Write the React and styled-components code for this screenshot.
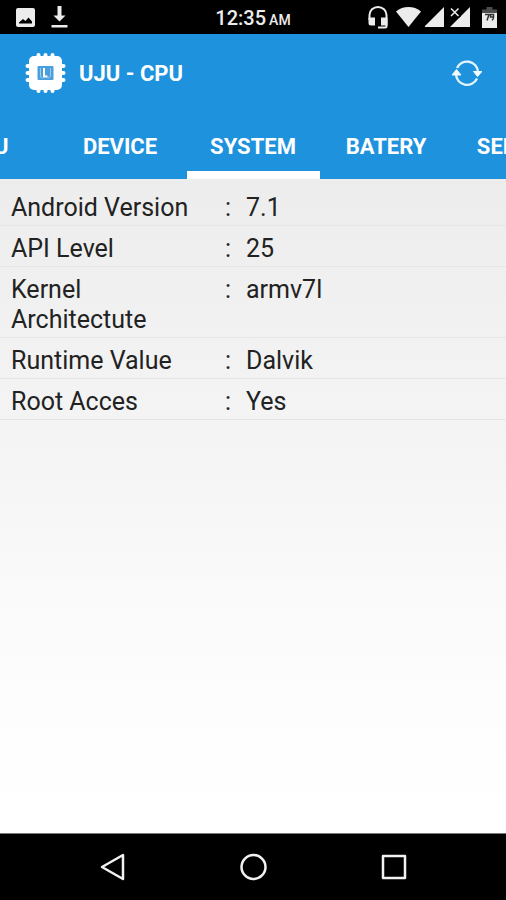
import React, {useState} from 'react';
import styled, {createGlobalStyle} from 'styled-components';

const GlobalStyle = createGlobalStyle`
    * {
        box-sizing: border-box;
    }

    body {
        margin: 0;
        font-family: Roboto, "Liberation Sans", sans-serif;
        background: #000;
    }

    button {
        padding: 0;
        border: 0;
        background: none;
        color: inherit;
        font-family: inherit;
        cursor: pointer;
    }

    svg {
        display: block;
    }
`;

const Screen = styled('div')`
    display: flex;
    flex-direction: column;
    min-height: 100vh;
    overflow: hidden;
`;

const StatusBar = styled('div')`
    display: grid;
    grid-template-columns: 1fr auto 1fr;
    align-items: center;
    height: 34px;
    padding: 0 9px;
    background: #000;
    color: #ececec;
`;

const StatusIcons = styled('div')`
    display: flex;
    align-items: center;
    justify-content: ${({$end}) => ($end ? 'flex-end' : 'flex-start')};
    gap: ${({$gap}) => $gap}px;
    padding-left: 7px;
`;

const Clock = styled('time')`
    padding-top: 3px;
    font-size: 20px;
    font-weight: 500;
    line-height: 24px;

    & small {
        margin-left: 3px;
        font-size: 14px;
    }
`;

const Header = styled('header')`
    background: #1e92dd;
    color: #fff;
`;

const Toolbar = styled('div')`
    display: flex;
    align-items: center;
    height: 78px;
    padding: 0 24px;
`;

const Title = styled('h1')`
    flex: 1;
    margin: 0;
    padding: 2px 0 0 13px;
    font-size: 22px;
    font-weight: 700;
    line-height: 28px;
`;

const Tabs = styled('div')`
    display: flex;
    justify-content: center;
    overflow: hidden;
`;

const Tab = styled('button')`
    flex: 0 0 133px;
    height: 67px;
    padding-top: 10px;
    border-bottom: 8px solid ${({$active}) => ($active ? '#fff' : 'transparent')};
    font-size: 22px;
    font-weight: 700;
    line-height: 28px;
`;

const Content = styled('main')`
    flex: 1;
    padding-top: 6px;
    background: linear-gradient(#ededed, #f4f4f4 38%, #fdfdfd 78%, #fff);
`;

const InfoList = styled('dl')`
    margin: 0;
`;

const InfoRow = styled('div')`
    display: grid;
    grid-template-columns: 210px 1fr;
    column-gap: 4px;
    padding: 8px 11px 2px;
    border-bottom: 1px solid #e6e6e6;
    color: #222;
    font-size: 25px;
    line-height: 30px;
`;

const InfoLabel = styled('dt')`
    padding-right: 8px;
`;

const InfoValue = styled('dd')`
    display: flex;
    margin: 0;

    &::before {
        content: ":";
        width: 21px;
    }
`;

const NavBar = styled('nav')`
    display: flex;
    height: 67px;
    padding: 0 43px;
    border-top: 1px solid #777;
    background: #000;
    color: #f2f2f2;
`;

const NavButton = styled('button')`
    display: flex;
    flex: 1;
    align-items: center;
    justify-content: center;
`;

const PictureIcon = () => (
    <svg width="19" height="19" viewBox="0 0 19 19" fill="currentColor">
        <path fillRule="evenodd" d="M2 0h15a2 2 0 0 1 2 2v15a2 2 0 0 1-2 2H2a2 2 0 0 1-2-2V2a2 2 0 0 1 2-2zM3 15.500h13v-2l-3.500-4-3 3.500-2.500-2-4 3.500z"/>
    </svg>
);

const DownloadIcon = () => (
    <svg width="17" height="22" viewBox="0 0 17 22" fill="currentColor">
        <path d="M6.500 0h4v9.500h4l-6 6-6-6h4zM0.500 19h16v2.500h-16z"/>
    </svg>
);

const HeadsetIcon = () => (
    <svg width="24" height="23" viewBox="0 0 24 23">
        <path d="M1.500 14V9a8.500 8 0 0 1 17 0v11q0 1.500-1.500 1.500h-7" fill="none" stroke="currentColor" strokeWidth="2"/>
        <path d="M0.500 11.500H7v8H3a2.500 2.500 0 0 1-2.500-2.500zM13 11.500h6.500v8H13z" fill="currentColor"/>
    </svg>
);

const WifiIcon = () => (
    <svg width="25" height="20" viewBox="0 0 25 20" fill="currentColor">
        <path d="M0 4.500a20 20 0 0 1 25 0L12.500 20z"/>
    </svg>
);

const SignalIcon = () => (
    <svg width="20" height="20" viewBox="0 0 20 20" fill="currentColor">
        <path d="M19 0v20H-1z"/>
    </svg>
);

const NoSignalIcon = () => (
    <svg width="21" height="20" viewBox="0 0 21 20">
        <path d="M21 0v20H1z" fill="currentColor"/>
        <path d="M2 1l9 9M11 0L1 10" stroke="#000" strokeWidth="3"/>
        <path d="M2 1.500l7.500 7.500M9.500 1.500L2 9" stroke="currentColor" strokeWidth="1.500"/>
    </svg>
);

const BatteryIcon = () => (
    <svg width="23" height="21" viewBox="-8 0 23 21">
        <path d="M4.500 0h6v2.500H15V6H0V2.500h4.500z" fill="#4c4c4c"/>
        <path d="M0 6h15v15H0z" fill="currentColor"/>
        <path d="M3 7.500h4l-2 6M11.500 11V7.500h-3V10h3q0 2.500-1.500 3.500" fill="none" stroke="#333" strokeWidth="1.500"/>
    </svg>
);

const ChipIcon = () => (
    <svg width="42" height="42" viewBox="0 0 42 42">
        <g stroke="#fff" strokeWidth="4" strokeLinecap="round">
            <path d="M14.500 3v36M21.500 3v36M28.500 3v36"/>
            <path d="M3.500 14h36M3.500 21h36M3.500 28h36"/>
        </g>
        <rect x="5" y="4" width="33" height="34" rx="5" fill="#fff"/>
        <rect x="13.500" y="14" width="16" height="14" rx="1" fill="#4a9fdc"/>
        <path d="M16.500 16v8q0 2 2 2M23.500 26q3 0 3-3v-7" fill="none" stroke="#9ccbee" strokeWidth="1"/>
        <path d="M20 16v8.500h3.500" fill="none" stroke="#fff" strokeWidth="2"/>
    </svg>
);

const RefreshIcon = () => (
    <svg width="30" height="28" viewBox="0 0 30 28">
        <g fill="none" stroke="#e4f5ff" strokeWidth="2.300">
            <path d="M5 9A11 11 0 0 1 26 13"/>
            <path d="M4 15a11 11 0 0 0 21 4.500"/>
        </g>
        <path d="M21.500 12.500h8.500l-4.500 5zM0 16h9l-4.500-5.500z" fill="#f2faff" stroke="#f2faff" strokeLinejoin="round"/>
    </svg>
);

const BackIcon = () => (
    <svg width="28" height="28" viewBox="0 0 28 28" fill="none" stroke="currentColor" strokeWidth="2.500" strokeLinejoin="round">
        <path d="M24 2v24L3 14z"/>
    </svg>
);

const HomeIcon = () => (
    <svg width="28" height="28" viewBox="0 0 28 28" fill="none" stroke="currentColor" strokeWidth="2.500">
        <circle cx="14.500" cy="14" r="12"/>
    </svg>
);

const RecentIcon = () => (
    <svg width="28" height="28" viewBox="0 0 28 28" fill="none" stroke="currentColor" strokeWidth="2.500" strokeLinejoin="round">
        <path d="M4 3h22v22H4z"/>
    </svg>
);

const tabs = ['CPU', 'DEVICE', 'SYSTEM', 'BATERY', 'SENSOR'];

const systemInfo = [
    {label: 'Android Version', value: '7.1'},
    {label: 'API Level', value: '25'},
    {label: 'Kernel Architectute', value: 'armv7l'},
    {label: 'Runtime Value', value: 'Dalvik'},
    {label: 'Root Acces', value: 'Yes'},
];

const App = () => {
    const [activeTab, setActiveTab] = useState('SYSTEM');

    return (
        <Screen>
            <GlobalStyle/>
            <StatusBar>
                <StatusIcons $gap={16}>
                    <PictureIcon/>
                    <DownloadIcon/>
                </StatusIcons>
                <Clock>12:35<small>AM</small></Clock>
                <StatusIcons $end $gap={4}>
                    <HeadsetIcon/>
                    <WifiIcon/>
                    <SignalIcon/>
                    <NoSignalIcon/>
                    <BatteryIcon/>
                </StatusIcons>
            </StatusBar>
            <Header>
                <Toolbar>
                    <ChipIcon/>
                    <Title>UJU - CPU</Title>
                    <button type="button" aria-label="Refresh">
                        <RefreshIcon/>
                    </button>
                </Toolbar>
                <Tabs role="tablist">
                    {tabs.map((tab) => (
                        <Tab
                            key={tab}
                            type="button"
                            role="tab"
                            aria-selected={tab === activeTab}
                            $active={tab === activeTab}
                            onClick={() => setActiveTab(tab)}
                        >
                            {tab}
                        </Tab>
                    ))}
                </Tabs>
            </Header>
            <Content>
                <InfoList>
                    {systemInfo.map(({label, value}) => (
                        <InfoRow key={label}>
                            <InfoLabel>{label}</InfoLabel>
                            <InfoValue>{value}</InfoValue>
                        </InfoRow>
                    ))}
                </InfoList>
            </Content>
            <NavBar>
                <NavButton type="button" aria-label="Back"><BackIcon/></NavButton>
                <NavButton type="button" aria-label="Home"><HomeIcon/></NavButton>
                <NavButton type="button" aria-label="Recent apps"><RecentIcon/></NavButton>
            </NavBar>
        </Screen>
    );
};

export default App;
